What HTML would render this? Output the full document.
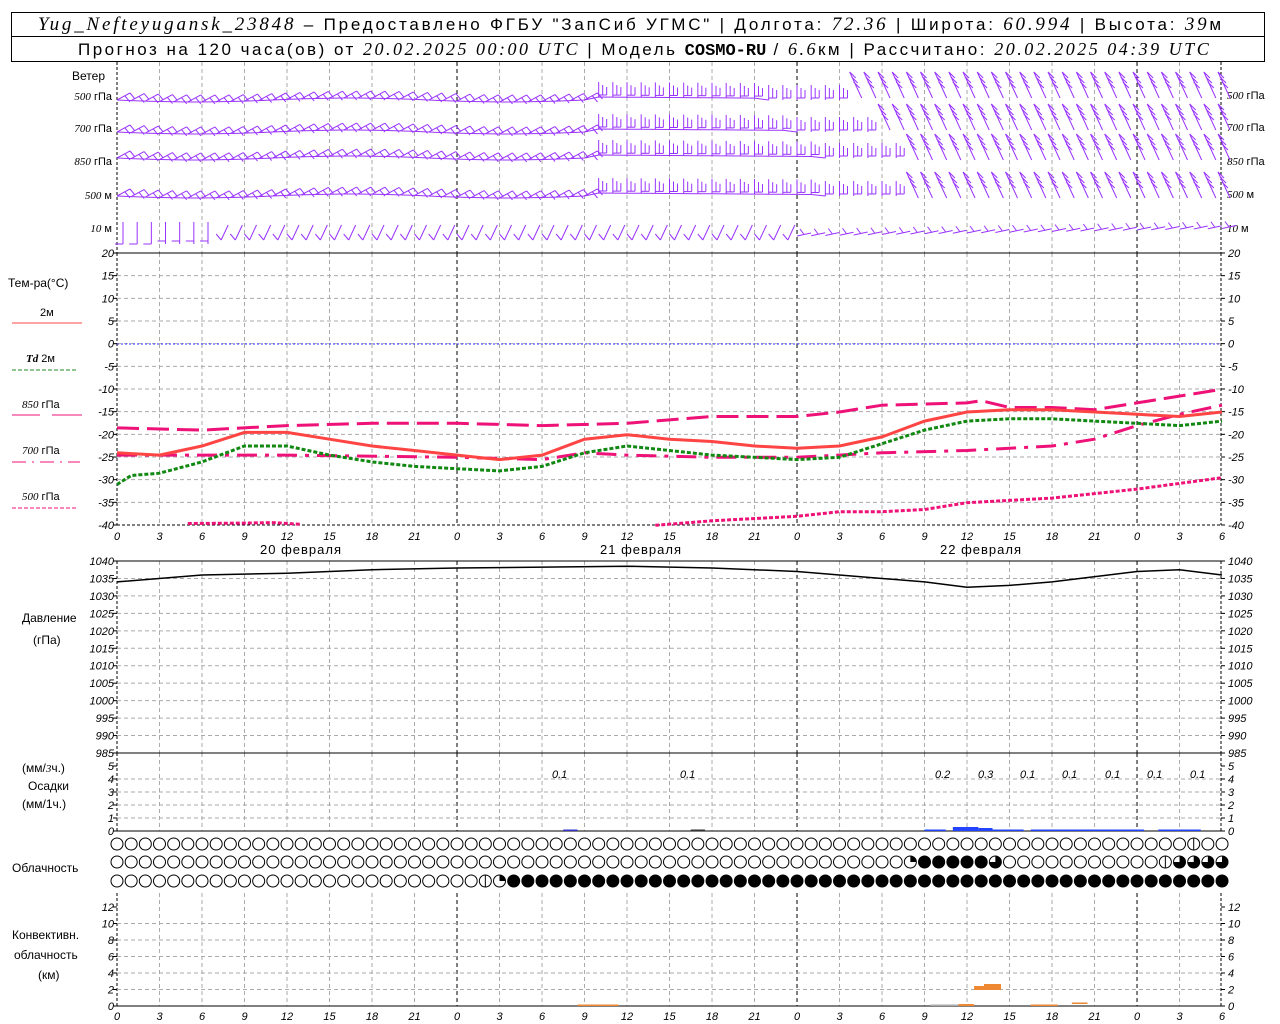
<!DOCTYPE html>
<html><head><meta charset="utf-8"><style>
html,body{margin:0;padding:0;background:#fff;width:1280px;height:1024px;overflow:hidden}
svg{display:block}
text{font-family:"Liberation Sans",sans-serif;fill:#000}
.ax{font-family:"Liberation Serif",serif;font-style:italic;font-size:11px}
.lb{font-size:12px}
.hd{font-size:17px;letter-spacing:2.8px}
</style></head><body>
<svg id="s" width="1280" height="1024" xmlns="http://www.w3.org/2000/svg">
<rect x="11.5" y="12.5" width="1253" height="49" fill="none" stroke="#000"/>
<line x1="11" y1="36.5" x2="1265" y2="36.5" stroke="#000"/>
<text x="38" y="30" class="hd"><tspan font-family="Liberation Serif" font-style="italic" font-size="19">Yug_Nefteyugansk_23848</tspan> – Предоставлено ФГБУ "ЗапСиб УГМС" | Долгота: <tspan font-family="Liberation Serif" font-style="italic" font-size="19">72.36</tspan> | Широта: <tspan font-family="Liberation Serif" font-style="italic" font-size="19">60.994</tspan> | Высота: <tspan font-family="Liberation Serif" font-style="italic" font-size="19">39</tspan>м</text>
<text x="78" y="55" class="hd" font-size="16" style="letter-spacing:2.5px">Прогноз на 120 часа(ов) от <tspan font-family="Liberation Serif" font-style="italic" font-size="18">20.02.2025 00:00 UTC</tspan>  | Модель <tspan font-family="Liberation Mono" font-weight="bold" font-size="17" style="letter-spacing:0">COSMO-RU</tspan> / <tspan font-family="Liberation Serif" font-style="italic" font-size="18">6.6</tspan>км | Рассчитано: <tspan font-family="Liberation Serif" font-style="italic" font-size="18">20.02.2025 04:39 UTC</tspan></text>

<g class="lb">
<text x="72" y="80">Ветер</text>
<text x="112" y="100" text-anchor="end" font-size="11"><tspan class="ax">500</tspan> гПа</text>
<text x="112" y="132" text-anchor="end" font-size="11"><tspan class="ax">700</tspan> гПа</text>
<text x="112" y="165" text-anchor="end" font-size="11"><tspan class="ax">850</tspan> гПа</text>
<text x="112" y="199" text-anchor="end" font-size="11"><tspan class="ax">500</tspan> м</text>
<text x="112" y="232" text-anchor="end" font-size="11"><tspan class="ax">10</tspan>   м</text>
<text x="1227" y="99" font-size="11"><tspan class="ax">500</tspan> гПа</text>
<text x="1227" y="131" font-size="11"><tspan class="ax">700</tspan> гПа</text>
<text x="1227" y="165" font-size="11"><tspan class="ax">850</tspan> гПа</text>
<text x="1227" y="198" font-size="11"><tspan class="ax">500</tspan> м</text>
<text x="1227" y="232" font-size="11"><tspan class="ax">10</tspan>   м</text>
<text x="8" y="287">Тем-ра(°C)</text>
<text x="40" y="316" font-size="11">2м</text>
<text x="26" y="362" font-size="11"><tspan class="ax" font-weight="bold">Td</tspan>  2м</text>
<text x="22" y="408" font-size="11"><tspan class="ax">850</tspan> гПа</text>
<text x="22" y="454" font-size="11"><tspan class="ax">700</tspan> гПа</text>
<text x="22" y="500" font-size="11"><tspan class="ax">500</tspan> гПа</text>
<text x="22" y="622">Давление</text>
<text x="33" y="644">(гПа)</text>
<text x="22" y="772">(мм/<tspan class="ax">3</tspan>ч.)</text>
<text x="28" y="790">Осадки</text>
<text x="22" y="808">(мм/1ч.)</text>
<text x="12" y="872">Облачность</text>
<text x="12" y="939">Конвективн.</text>
<text x="14" y="959">облачность</text>
<text x="38" y="979">(км)</text>
<text x="260" y="554" font-size="13" style="letter-spacing:1px">20 февраля</text>
<text x="600" y="554" font-size="13" style="letter-spacing:1px">21 февраля</text>
<text x="940" y="554" font-size="13" style="letter-spacing:1px">22 февраля</text>
</g>
<g class="ax" font-size="13">
<text x="552" y="778">0.1</text><text x="680" y="778">0.1</text>
<text x="935" y="778">0.2</text><text x="978" y="778">0.3</text>
<text x="1020" y="778">0.1</text><text x="1062" y="778">0.1</text>
<text x="1105" y="778">0.1</text><text x="1147" y="778">0.1</text>
<text x="1190" y="778">0.1</text>
</g>
<g id="g"></g>
<g id="axl" class="ax" font-size="10"></g>
<g id="xl" class="ax" font-size="14"></g>
</svg>
<script>
var S="http://www.w3.org/2000/svg",G=document.getElementById('g');
function el(t,a,p){var e=document.createElementNS(S,t);for(var k in a)e.setAttribute(k,a[k]);(p||G).appendChild(e);return e;}
function X(h){return 117+h*14.167;}
function ln(x1,y1,x2,y2,c,w,d){var a={x1:x1,y1:y1,x2:x2,y2:y2,stroke:c,'stroke-width':w||1};if(d)a['stroke-dasharray']=d;return el('line',a);}
var panels=[[62,253],[253,525],[561,753],[753,831],[893,1006]];
panels.forEach(function(p){
 for(var h=3;h<78;h+=3){var day=(h%24==0);ln(X(h),p[0],X(h),p[1],day?'#000':'#aaa',1,'4,3');}
 ln(117,p[0],117,p[1],'#000',1,'3,2');ln(1221,p[0],1221,p[1],'#000',1,'3,2');
});
function hgrid(y0,y1,n,vals){for(var i=0;i<=n;i++){var y=y0+(y1-y0)*i/n;if(i>0&&i<n)ln(117,y,1221,y,'#aaa',1,'4,3');
 if(vals){ln(113,y,117,y,'#000');ln(1221,y,1225,y,'#000');var t=el('text',{x:114,y:y+4,'text-anchor':'end'},document.getElementById('axl'));t.textContent=vals[i];
 var t2=el('text',{x:1228,y:y+4},document.getElementById('axl'));t2.textContent=vals[i];}}}
var tv=[];for(var v=20;v>=-40;v-=5)tv.push(v);hgrid(253,525,12,tv);
var pv=[];for(var v=1040;v>=985;v-=5)pv.push(v);hgrid(561,753,11,pv);
hgrid(766,831,5,[5,4,3,2,1,0]);
hgrid(907,1006,6,[12,10,8,6,4,2,0]);
ln(117,253,1221,253,'#000');ln(117,561,1221,561,'#000');ln(117,753,1221,753,'#000');ln(117,831,1221,831,'#000');ln(117,1006,1221,1006,'#000');ln(117,525,1221,525,'#000',1,'3,2');
ln(117,344,1221,344,'#33f',1,'2,2');
[540,1020].forEach(function(y){for(var h=0;h<=78;h+=3){var t=el('text',{x:X(h),y:y,'text-anchor':'middle'},document.getElementById('xl'));t.textContent=(h%24);}});
ln(12,323,82,323,'#f44',1);ln(12,370,78,370,'#282',1,'4,2');ln(12,415,40,415,'#e17',1);ln(52,415,82,415,'#e17',1);
ln(12,462,80,462,'#e17',1,'14,6,2,6');ln(12,508,78,508,'#e17',1,'4,2');
function TY(t){return 344-t*4.533;}
function curve(pts,fy,c,w,d){var s='';pts.forEach(function(p,i){s+=(i?'L':'M')+X(p[0]).toFixed(1)+','+fy(p[1]).toFixed(1);});var a={d:s,fill:'none',stroke:c,'stroke-width':w};if(d)a['stroke-dasharray']=d;el('path',a);}
curve([[0,-18.5],[6,-19],[12,-18],[18,-17.5],[24,-17.5],[30,-18],[36,-17.5],[42,-16],[48,-16],[51,-15],[54,-13.5],[60,-13],[61,-12.5],[63,-14],[66,-14],[69,-14.5],[72,-13],[78,-10]],TY,'#e17',3,'22,8');
curve([[0,-24.5],[12,-24.5],[24,-25],[30,-25.5],[33,-24],[36,-24.5],[42,-25],[48,-25],[54,-24],[60,-23.5],[66,-22.5],[69,-21],[72,-18],[75,-15.5],[78,-13.5]],TY,'#e17',3,'20,8,4,8');
curve([[0,-24],[3,-24.5],[6,-22.5],[9,-19.5],[12,-19.5],[15,-21],[18,-22.5],[21,-23.5],[24,-24.5],[27,-25.5],[30,-24.5],[33,-21],[36,-20],[39,-21],[42,-21.5],[45,-22.5],[48,-23],[51,-22.5],[54,-20.5],[57,-17],[60,-15],[63,-14.5],[66,-14.5],[69,-15],[72,-15.5],[75,-16],[78,-15]],TY,'#f44',3);
curve([[0,-31],[1,-29],[3,-28.5],[6,-26],[9,-22.5],[12,-22.5],[15,-24.5],[18,-26],[21,-27],[24,-27.5],[27,-28],[30,-27],[33,-24],[36,-22.5],[39,-23.5],[42,-24.5],[45,-25],[48,-25.5],[51,-25],[54,-22],[57,-19],[60,-17],[63,-16.5],[66,-16.5],[69,-17],[72,-17.5],[75,-18],[78,-17]],TY,'#181',3,'4,2');
curve([[5,-39.6],[9,-39.5],[11,-39.4],[13,-39.8]],TY,'#e17',3,'4,2');
curve([[38,-40],[42,-39],[48,-38],[51,-37],[54,-37],[57,-36.5],[60,-35],[66,-34],[72,-32],[78,-29.5]],TY,'#e17',3,'4,2');
curve([[0,1034],[6,1036],[12,1036.5],[18,1037.5],[24,1038],[36,1038.5],[42,1038],[48,1037],[54,1035],[57,1034],[60,1032.5],[63,1033],[66,1034],[72,1037],[75,1037.5],[78,1036]],function(p){return 561+(1040-p)*3.49;},'#000',1.5);
function bar(h0,h1,hgt,c,y){el('rect',{x:X(h0),y:y-hgt,width:X(h1)-X(h0),height:hgt,fill:c});}
bar(31.5,32.5,1.5,'#33c',831);bar(40.5,41.5,1.5,'#333',831);
bar(57,58.5,1.5,'#24f',831);bar(59,60.8,4,'#24f',831);bar(60.8,61.8,3,'#24f',831);bar(61.8,64,1.5,'#24f',831);bar(64.5,72.5,1.5,'#24f',831);bar(73.5,76.5,1.5,'#24f',831);
bar(32.5,35.4,1.5,'#e83',1006);bar(57.4,59.4,1.5,'#aaa',1006);bar(59.4,60.5,2,'#e83',1006);bar(60.5,62.4,4,'#e83',990);bar(61.2,62.4,6,'#e83',990);
bar(64.5,66.4,1.5,'#e83',1006);bar(67.4,68.5,1.5,'#e83',1004);
function circ(cx,cy,type){el('circle',{cx:cx,cy:cy,r:6,fill:type=='f'?'#000':'#fff',stroke:'#000','stroke-width':1});
 if(type=='h'){ln(cx,cy-6,cx,cy+6,'#000');}
 if(type=='q'){el('path',{d:'M'+cx+','+cy+'L'+cx+','+(cy-6)+'A6,6 0 0,1 '+(cx+6)+','+cy+'Z',fill:'#000'});}
 if(type=='t'){el('path',{d:'M'+cx+','+cy+'L'+cx+','+(cy-6)+'A6,6 0 1,1 '+(cx-6)+','+cy+'Z',fill:'#000'});}}
for(var h=0;h<=78;h++){var x=X(h);
 circ(x,844,h==76?'h':'o');
 var t2='o';if(h==56)t2='q';if(h>=57&&h<=61)t2='f';if(h==62)t2='t';if(h==74)t2='h';if(h>=75)t2='t';circ(x,862,t2);
 var t3='o';if(h==26)t3='h';if(h==27)t3='q';if(h>=28)t3='f';circ(x,881,t3);}
var P='#93f';
function L(a,b,c,d){ln(a,b,c,d,P);}
var rows=[[100,46,52],[132,48,54],[158,50,56],[196,50,56]];
rows.forEach(function(R){var y0=R[0],s='';
 for(var h=0;h<=78;h++){var x=X(h);var y=y0+(h<34?2*Math.sin(h/3.5):(h<R[1]?-3+(h-34)*0.1:0));
  if(h<=R[1])s+=(h?'L':'M')+x.toFixed(1)+','+y.toFixed(1);
  if(h<34){L(x,y,x+13,y-7);L(x+13,y-7,x+18,y-1);L(x+8,y-4,x+13,y+2);}
  else if(h<R[2]){L(x,y,x,y-15);L(x+4,y-2,x+4,y-12);L(x+8,y-2,x+8,y-10);L(x,y-2,x+8,y-2);}
  else{var yb=y0+(R[0]==158||R[0]==196?2:-2);L(x+8,yb,x-4,yb-26);L(x-4,yb-26,x+2,yb-20);L(x-2,yb-21,x+4,yb-15);L(x,yb-16,x+6,yb-10);}
 }
 el('path',{d:s,fill:'none',stroke:P});});
for(var h=0;h<=78;h++){var x=X(h);
 if(h<7){L(x+6,222,x+6,244);L(x+6,244-(h>2?3:0),x-2,244-(h>2?3:0));}
 else if(h<48){L(x+12,225,x+5,240);L(x+5,240,x,234);}
 else{var y=236-(h-48)*0.25;L(x,y,x+14,y-3);L(x+7,y-1.5,x+3,y-7);}}
</script>
</body></html>
